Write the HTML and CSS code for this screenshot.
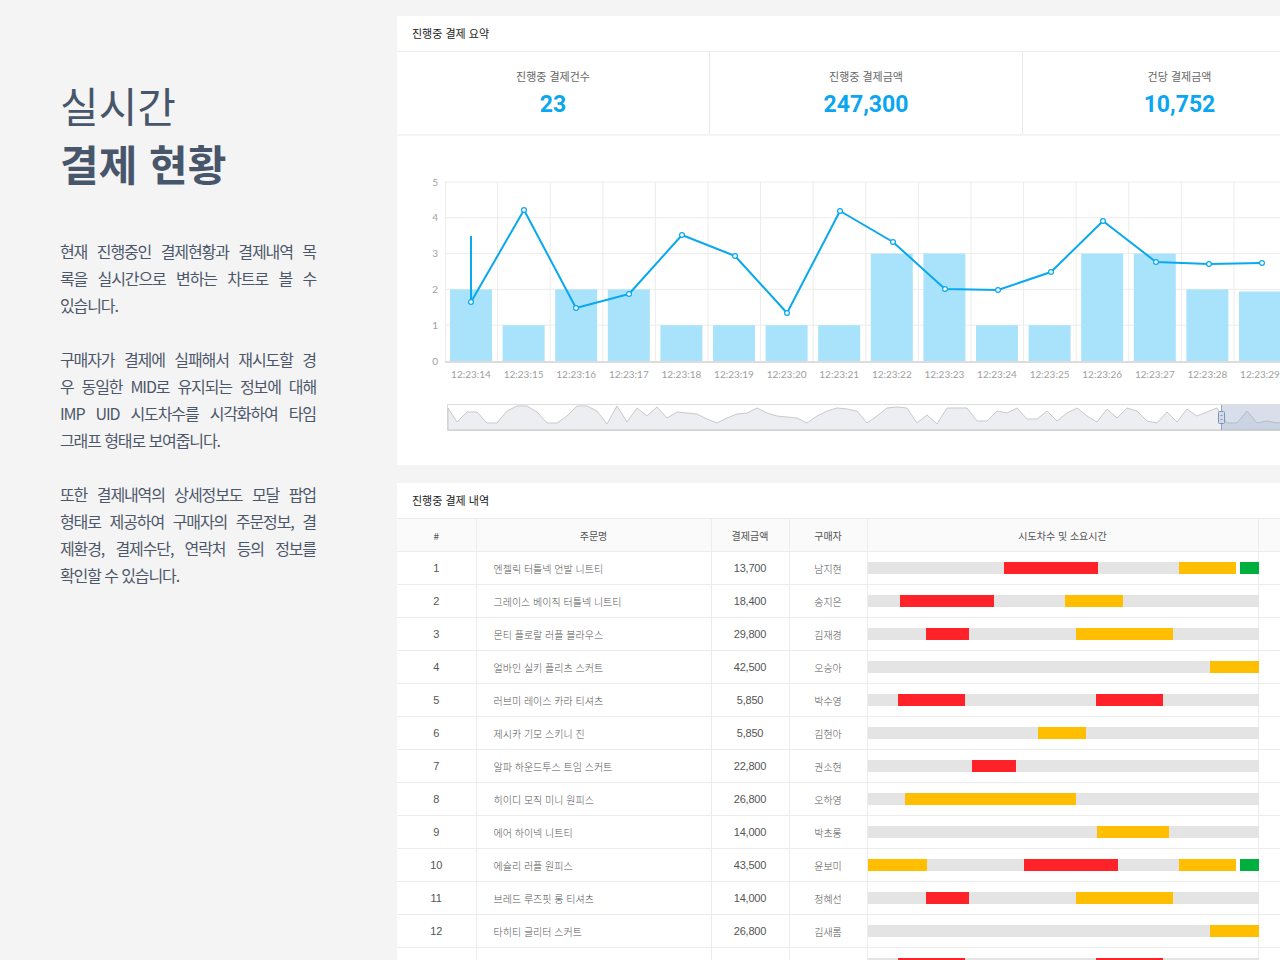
FILE: index.html
```html
<!DOCTYPE html>
<html lang="ko">
<head>
<meta charset="utf-8">
<title>실시간 결제 현황</title>
<link rel="stylesheet" href="styles.css">
</head>
<body>
<div class="page">
  <section class="intro">
    <h1 class="title">실시간<br><strong>결제 현황</strong></h1>
    <div class="desc">
      <p><span class="ln">현재 진행중인 결제현황과 결제내역 목</span><span class="ln">록을 실시간으로 변하는 차트로 볼 수</span><span class="ln end">있습니다.</span></p>
      <p><span class="ln">구매자가 결제에 실패해서 재시도할 경</span><span class="ln">우 동일한 MID로 유지되는 정보에 대해</span><span class="ln">IMP UID 시도차수를 시각화하여 타임</span><span class="ln end">그래프 형태로 보여줍니다.</span></p>
      <p><span class="ln">또한 결제내역의 상세정보도 모달 팝업</span><span class="ln">형태로 제공하여 구매자의 주문정보, 결</span><span class="ln">제환경, 결제수단, 연락처 등의 정보를</span><span class="ln end">확인할 수 있습니다.</span></p>
    </div>
  </section>

  <main class="main">
    <div class="card">
      <div class="card-head">진행중 결제 요약</div>
      <div class="stats">
        <div class="stat"><div class="stat-label">진행중 결제건수</div><div class="stat-value">23</div></div>
        <div class="stat"><div class="stat-label">진행중 결제금액</div><div class="stat-value">247,300</div></div>
        <div class="stat"><div class="stat-label">건당 결제금액</div><div class="stat-value">10,752</div></div>
      </div>
    </div>

    <div class="card chart-card">
      <svg class="chart" width="940" height="329" viewBox="0 0 940 329" xmlns="http://www.w3.org/2000/svg">
        <g class="grid" stroke="#ececec" stroke-width="1">
          <line x1="48" y1="46" x2="940" y2="46"/>
          <line x1="48" y1="81.8" x2="940" y2="81.8"/>
          <line x1="48" y1="117.6" x2="940" y2="117.6"/>
          <line x1="48" y1="153.4" x2="940" y2="153.4"/>
          <line x1="48" y1="189.2" x2="940" y2="189.2"/>
          <line x1="48.5" y1="46" x2="48.5" y2="225"/>
          <line x1="100.6" y1="46" x2="100.6" y2="225"/>
          <line x1="153.2" y1="46" x2="153.2" y2="225"/>
          <line x1="205.8" y1="46" x2="205.8" y2="225"/>
          <line x1="258.4" y1="46" x2="258.4" y2="225"/>
          <line x1="311" y1="46" x2="311" y2="225"/>
          <line x1="363.6" y1="46" x2="363.6" y2="225"/>
          <line x1="416.2" y1="46" x2="416.2" y2="225"/>
          <line x1="468.8" y1="46" x2="468.8" y2="225"/>
          <line x1="521.4" y1="46" x2="521.4" y2="225"/>
          <line x1="574" y1="46" x2="574" y2="225"/>
          <line x1="626.6" y1="46" x2="626.6" y2="225"/>
          <line x1="679.2" y1="46" x2="679.2" y2="225"/>
          <line x1="731.8" y1="46" x2="731.8" y2="225"/>
          <line x1="784.4" y1="46" x2="784.4" y2="225"/>
          <line x1="837" y1="46" x2="837" y2="225"/>
          <line x1="889.6" y1="46" x2="889.6" y2="225"/>
        </g>
        <g class="ylab" fill="#a0a0a0" font-size="10" text-anchor="end">
          <text x="41" y="49.5">5</text>
          <text x="41" y="85">4</text>
          <text x="41" y="121">3</text>
          <text x="41" y="157">2</text>
          <text x="41" y="193">1</text>
          <text x="41" y="228.5">0</text>
        </g>
        <g class="bars" fill="#a8e3fb">
          <rect x="53" y="153.4" width="42" height="71.6"/>
          <rect x="105.6" y="189.2" width="42" height="35.8"/>
          <rect x="158.2" y="153.4" width="42" height="71.6"/>
          <rect x="210.8" y="153.4" width="42" height="71.6"/>
          <rect x="263.4" y="189.2" width="42" height="35.8"/>
          <rect x="316" y="189.2" width="42" height="35.8"/>
          <rect x="368.6" y="189.2" width="42" height="35.8"/>
          <rect x="421.2" y="189.2" width="42" height="35.8"/>
          <rect x="473.8" y="117.6" width="42" height="107.4"/>
          <rect x="526.4" y="117.6" width="42" height="107.4"/>
          <rect x="579" y="189.2" width="42" height="35.8"/>
          <rect x="631.6" y="189.2" width="42" height="35.8"/>
          <rect x="684.2" y="117.6" width="42" height="107.4"/>
          <rect x="736.8" y="117.6" width="42" height="107.4"/>
          <rect x="789.4" y="153.4" width="42" height="71.6"/>
          <rect x="842" y="155.5" width="42" height="69.5"/>
        </g>
        <line x1="48" y1="226" x2="940" y2="226" stroke="#dcdcdc" stroke-width="2"/>
        <polyline fill="none" stroke="#0aa8ec" stroke-width="2" stroke-linejoin="round"
          points="74,100 74,166 127,74 179,172 232,158 285,99 338,120 390,177 443,75 496,106 548,153 601,154 654,136 706,85 759,126 812,128 865,127"/>
        <g class="marks" fill="#fff" stroke="#0aa8ec" stroke-width="1.2">
          <circle cx="74" cy="166" r="2.4"/>
          <circle cx="127" cy="74" r="2.4"/>
          <circle cx="179" cy="172" r="2.4"/>
          <circle cx="232" cy="158" r="2.4"/>
          <circle cx="285" cy="99" r="2.4"/>
          <circle cx="338" cy="120" r="2.4"/>
          <circle cx="390" cy="177" r="2.4"/>
          <circle cx="443" cy="75" r="2.4"/>
          <circle cx="496" cy="106" r="2.4"/>
          <circle cx="548" cy="153" r="2.4"/>
          <circle cx="601" cy="154" r="2.4"/>
          <circle cx="654" cy="136" r="2.4"/>
          <circle cx="706" cy="85" r="2.4"/>
          <circle cx="759" cy="126" r="2.4"/>
          <circle cx="812" cy="128" r="2.4"/>
          <circle cx="865" cy="127" r="2.4"/>
        </g>
        <g class="xlab" fill="#a0a0a0" font-size="10" text-anchor="middle">
          <text x="74" y="241.5">12:23:14</text>
          <text x="126.6" y="241.5">12:23:15</text>
          <text x="179.2" y="241.5">12:23:16</text>
          <text x="231.8" y="241.5">12:23:17</text>
          <text x="284.4" y="241.5">12:23:18</text>
          <text x="337" y="241.5">12:23:19</text>
          <text x="389.6" y="241.5">12:23:20</text>
          <text x="442.2" y="241.5">12:23:21</text>
          <text x="494.8" y="241.5">12:23:22</text>
          <text x="547.4" y="241.5">12:23:23</text>
          <text x="600" y="241.5">12:23:24</text>
          <text x="652.6" y="241.5">12:23:25</text>
          <text x="705.2" y="241.5">12:23:26</text>
          <text x="757.8" y="241.5">12:23:27</text>
          <text x="810.4" y="241.5">12:23:28</text>
          <text x="863" y="241.5">12:23:29</text>
        </g>
        <rect x="50.5" y="268.5" width="900" height="26" fill="#fff" stroke="#dddddd"/>
        <polygon fill="#eceef1" stroke="#c9c9c9" stroke-width="1"
          points="51,294 51,272 60,286 70,276 80,276 90,287 100,287 110,275 120,270 130,270 140,276 150,287 160,287 170,280 180,270 190,270 200,275 210,288 220,270 230,286 240,272 250,280 260,271 270,282 280,276 290,277 300,278 310,283 320,287 330,282 340,278 350,277 360,272 370,277 380,280 390,281 400,282 410,287 420,280 430,275 440,272 450,273 460,275 470,287 480,280 490,272 500,271 510,272 520,287 530,279 540,288 550,272 560,272 570,272 580,285 590,285 600,275 610,277 620,272 630,283 640,283 650,275 660,285 670,277 680,272 690,280 700,286 710,273 720,282 730,272 740,275 750,285 760,287 770,276 780,286 790,273 800,280 810,276 820,272 830,287 840,287 850,275 860,287 870,285 880,287 890,286 900,276 910,276 920,284 930,274 940,280 940,294"/>
        <rect x="824" y="269" width="116" height="25" fill="#8ea3c7" fill-opacity="0.35"/>
        <line x1="824.5" y1="269" x2="824.5" y2="294" stroke="#8fa2c4" stroke-width="1"/>
        <rect x="821.5" y="275.5" width="6" height="12" rx="1" fill="#d4dcea" stroke="#7f93b8"/>
        <line x1="823.5" y1="279.5" x2="825.5" y2="279.5" stroke="#7f93b8"/>
        <line x1="823.5" y1="283.5" x2="825.5" y2="283.5" stroke="#7f93b8"/>
      </svg>
    </div>

    <div class="card table-card">
      <div class="card-head">진행중 결제 내역</div>
      <table class="list">
        <colgroup>
          <col class="c-no"><col class="c-name"><col class="c-amount"><col class="c-buyer"><col class="c-time"><col class="c-more">
        </colgroup>
        <thead>
          <tr><th>#</th><th>주문명</th><th>결제금액</th><th>구매자</th><th>시도차수 및 소요시간</th><th>상세</th></tr>
        </thead>
        <tbody>
          <tr><td class="no">1</td><td class="name">엔젤릭 터틀넥 언발 니트티</td><td class="amt">13,700</td><td class="buyer">남지현</td>
            <td class="time"><div class="track"><span class="s g" style="width:136px"></span><span class="s r" style="width:94px"></span><span class="s g" style="width:81px"></span><span class="s y" style="width:57px"></span><span class="s w" style="width:4px"></span><span class="s gr" style="width:19px"></span></div></td><td></td></tr>
          <tr><td class="no">2</td><td class="name">그레이스 베이직 터틀넥 니트티</td><td class="amt">18,400</td><td class="buyer">송지은</td>
            <td class="time"><div class="track"><span class="s g" style="width:32px"></span><span class="s r" style="width:94px"></span><span class="s g" style="width:71px"></span><span class="s y" style="width:58px"></span><span class="s g" style="width:136px"></span></div></td><td></td></tr>
          <tr><td class="no">3</td><td class="name">몬티 플로랄 러플 블라우스</td><td class="amt">29,800</td><td class="buyer">김재경</td>
            <td class="time"><div class="track"><span class="s g" style="width:58px"></span><span class="s r" style="width:43px"></span><span class="s g" style="width:107px"></span><span class="s y" style="width:97px"></span><span class="s g" style="width:86px"></span></div></td><td></td></tr>
          <tr><td class="no">4</td><td class="name">얼바인 실키 플리츠 스커트</td><td class="amt">42,500</td><td class="buyer">오승아</td>
            <td class="time"><div class="track"><span class="s g" style="width:342px"></span><span class="s y" style="width:49px"></span></div></td><td></td></tr>
          <tr><td class="no">5</td><td class="name">러브미 레이스 카라 티셔츠</td><td class="amt">5,850</td><td class="buyer">박수영</td>
            <td class="time"><div class="track"><span class="s g" style="width:30px"></span><span class="s r" style="width:67px"></span><span class="s g" style="width:131px"></span><span class="s r" style="width:67px"></span><span class="s g" style="width:96px"></span></div></td><td></td></tr>
          <tr><td class="no">6</td><td class="name">제시카 기모 스키니 진</td><td class="amt">5,850</td><td class="buyer">김현아</td>
            <td class="time"><div class="track"><span class="s g" style="width:170px"></span><span class="s y" style="width:48px"></span><span class="s g" style="width:173px"></span></div></td><td></td></tr>
          <tr><td class="no">7</td><td class="name">알파 하운드투스 트임 스커트</td><td class="amt">22,800</td><td class="buyer">권소현</td>
            <td class="time"><div class="track"><span class="s g" style="width:104px"></span><span class="s r" style="width:44px"></span><span class="s g" style="width:243px"></span></div></td><td></td></tr>
          <tr><td class="no">8</td><td class="name">히이디 모직 미니 원피스</td><td class="amt">26,800</td><td class="buyer">오하영</td>
            <td class="time"><div class="track"><span class="s g" style="width:37px"></span><span class="s y" style="width:171px"></span><span class="s g" style="width:183px"></span></div></td><td></td></tr>
          <tr><td class="no">9</td><td class="name">에어 하이넥 니트티</td><td class="amt">14,000</td><td class="buyer">박초롱</td>
            <td class="time"><div class="track"><span class="s g" style="width:229px"></span><span class="s y" style="width:72px"></span><span class="s g" style="width:90px"></span></div></td><td></td></tr>
          <tr><td class="no">10</td><td class="name">에슐리 러플 원피스</td><td class="amt">43,500</td><td class="buyer">윤보미</td>
            <td class="time"><div class="track"><span class="s y" style="width:59px"></span><span class="s g" style="width:97px"></span><span class="s r" style="width:94px"></span><span class="s g" style="width:61px"></span><span class="s y" style="width:57px"></span><span class="s w" style="width:4px"></span><span class="s gr" style="width:19px"></span></div></td><td></td></tr>
          <tr><td class="no">11</td><td class="name">브레드 루즈핏 롱 티셔츠</td><td class="amt">14,000</td><td class="buyer">정혜선</td>
            <td class="time"><div class="track"><span class="s g" style="width:58px"></span><span class="s r" style="width:43px"></span><span class="s g" style="width:107px"></span><span class="s y" style="width:97px"></span><span class="s g" style="width:86px"></span></div></td><td></td></tr>
          <tr><td class="no">12</td><td class="name">타히티 글리터 스커트</td><td class="amt">26,800</td><td class="buyer">김새롬</td>
            <td class="time"><div class="track"><span class="s g" style="width:342px"></span><span class="s y" style="width:49px"></span></div></td><td></td></tr>
          <tr><td class="no">13</td><td class="name">러브미 레이스 카라 티셔츠</td><td class="amt">5,850</td><td class="buyer">박수영</td>
            <td class="time"><div class="track"><span class="s g" style="width:30px"></span><span class="s r" style="width:67px"></span><span class="s g" style="width:131px"></span><span class="s r" style="width:67px"></span><span class="s g" style="width:96px"></span></div></td><td></td></tr>
        </tbody>
      </table>
    </div>
  </main>
</div>
</body>
</html>
```

FILE: styles.css
```css
html, body {
  margin: 0;
  padding: 0;
  width: 1280px;
  height: 960px;
  overflow: hidden;
  background: #f4f4f4;
}

body {
  font-family: "Noto Sans CJK KR", "Noto Sans", sans-serif;
}

.page {
  display: flex;
  align-items: flex-start;
  width: 1337px;
}

.intro {
  flex: none;
  width: 337px;
  padding-left: 60px;
}

.title {
  margin: 76px 0 0;
  font-size: 42px;
  line-height: 58px;
  font-weight: 400;
  color: #48566c;
}

.title strong {
  font-weight: 700;
}

.desc {
  margin-top: 46px;
  width: 256px;
}

.desc p {
  margin: 0 0 27px;
  font-size: 16px;
  line-height: 27px;
  letter-spacing: -1.1px;
  color: #4d576a;
  text-align: justify;
  text-align-last: justify;
}

.desc .ln {
  display: block;
  white-space: nowrap;
}

.desc .ln.end {
  text-align-last: left;
}

.main {
  flex: none;
  width: 940px;
  padding-top: 16px;
}

.card {
  background: #fff;
}

.card-head {
  height: 36px;
  padding-left: 15px;
  font-size: 11px;
  line-height: 35px;
  color: #222;
  border-bottom: 1px solid #ebebeb;
  box-sizing: border-box;
}

.stats {
  display: grid;
  grid-template-columns: 313px 313px 314px;
  height: 82px;
}

.stat {
  border-right: 1px solid #e8e8e8;
  text-align: center;
  padding-top: 17px;
}

.stat-label {
  font-size: 11px;
  line-height: 14px;
  color: #666;
}

.stat-value {
  margin-top: 8px;
  font-family: "Roboto", "Noto Sans", sans-serif;
  font-weight: 700;
  font-size: 23px;
  line-height: 28px;
  color: #0aa6ef;
}

.chart-card {
  margin-top: 2px;
  height: 329px;
}

.chart {
  display: block;
  font-family: "Lato", "Noto Sans", sans-serif;
}

.table-card {
  margin-top: 18px;
}

.list {
  border-collapse: collapse;
  table-layout: fixed;
  width: 940px;
  font-size: 10px;
  color: #555;
}

.c-no { width: 79px; }
.c-name { width: 235px; }
.c-amount { width: 78px; }
.c-buyer { width: 78px; }
.c-time { width: 391px; }
.c-more { width: 79px; }

.list th {
  height: 32px;
  padding: 0;
  background: #fafafa;
  font-weight: 400;
  color: #555;
  border: 1px solid #ececec;
  border-top: 0;
  white-space: nowrap;
  overflow: hidden;
}

.list td {
  height: 32px;
  padding: 0;
  border: 1px solid #ececec;
  border-top: 0;
  white-space: nowrap;
  font-weight: 300;
}

.list th:first-child,
.list td:first-child {
  border-left: 0;
}

.list td.no,
.list td.buyer {
  text-align: center;
}

.list td.amt {
  text-align: center;
  font-family: "Liberation Sans", "Noto Sans CJK KR", sans-serif;
  font-size: 11px;
  letter-spacing: -0.2px;
  font-weight: 400;
}

.list td.no {
  font-family: "Liberation Sans", "Noto Sans CJK KR", sans-serif;
  font-size: 11px;
  font-weight: 400;
}

.list td.name {
  padding-left: 17px;
}

.list td.time {
  padding: 0;
}

.track {
  display: flex;
  height: 12px;
}

.s {
  display: block;
  flex: none;
  height: 12px;
}

.s.g { background: #e4e4e4; }
.s.r { background: #ff2229; }
.s.y { background: #ffbe00; }
.s.gr { background: #00b03f; }
.s.w { background: #fff; }
```
